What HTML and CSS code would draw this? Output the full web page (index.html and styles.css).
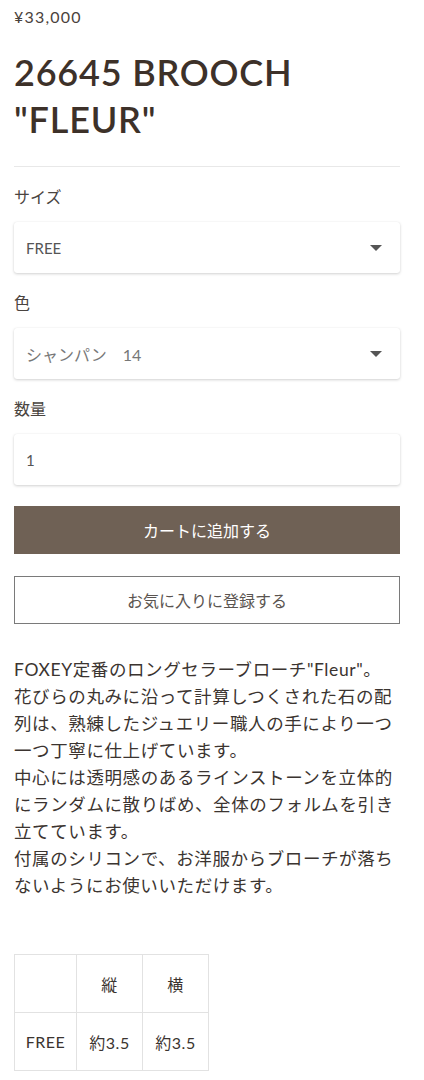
FILE: index.html
```html
<!DOCTYPE html>
<html lang="ja">
<head>
    <meta charset="UTF-8">
    <meta name="viewport" content="width=device-width, initial-scale=1.0">
    <title>26645 BROOCH "FLEUR"</title>
    <link rel="stylesheet" href="styles.css">
</head>
<body>
    <main class="product">
        <p class="price">¥33,000</p>
        <h1 class="title">26645 BROOCH<br>"FLEUR"</h1>
        <hr class="divider">

        <!-- Optionen -->
        <form class="options">
            <label class="field-label">サイズ</label>
            <div class="select-box">
                <span>FREE</span>
                <span class="arrow"></span>
            </div>

            <label class="field-label">色</label>
            <div class="select-box">
                <span class="jp">シャンパン　14</span>
                <span class="arrow"></span>
            </div>

            <label class="field-label">数量</label>
            <div class="select-box">
                <span>1</span>
            </div>

            <button type="button" class="btn-cart">カートに追加する</button>
            <button type="button" class="btn-fav">お気に入りに登録する</button>
        </form>

        <p class="description">FOXEY定番のロングセラーブローチ"Fleur"。<br>花びらの丸みに沿って計算しつくされた石の配列は、熟練したジュエリー職人の手により一つ一つ丁寧に仕上げています。<br>中心には透明感のあるラインストーンを立体的にランダムに散りばめ、全体のフォルムを引き立てています。<br>付属のシリコンで、お洋服からブローチが落ちないようにお使いいただけます。</p>

        <!-- Größentabelle -->
        <table class="size-table">
            <tr>
                <td></td>
                <td>縦</td>
                <td>横</td>
            </tr>
            <tr>
                <td>FREE</td>
                <td>約3.5</td>
                <td>約3.5</td>
            </tr>
        </table>
    </main>
</body>
</html>
```

FILE: styles.css
```css
body {
    margin: 0;
    font-family: Lato, "Noto Sans CJK JP", sans-serif;
    color: #3b3430;
    background-color: #fff;
}
.product {
    padding: 0 24px 40px 14px;
}
.price {
    margin: 6px 0 0;
    font-size: 16px;
    line-height: 22px;
    letter-spacing: 1.2px;
    color: #4a423c;
}
.title {
    margin: 21px 0 0;
    font-size: 36px;
    line-height: 47px;
    font-weight: 600;
    letter-spacing: 0.8px;
    color: #3d3129;
}
.divider {
    margin: 23px 0 0;
    border: none;
    border-top: 1px solid #e8e8e8;
}
.options {
    display: flex;
    flex-direction: column;
}
.field-label {
    margin-top: 18px;
    font-size: 16px;
    line-height: 24px;
    color: #4a4440;
}
.select-box {
    margin-top: 13px;
    height: 51px;
    padding: 0 18px 0 12px;
    display: flex;
    align-items: center;
    justify-content: space-between;
    border-radius: 3px;
    background-color: #fff;
    box-shadow: 0 1px 3px rgba(0, 0, 0, 0.18), 0 0 1px rgba(0, 0, 0, 0.08);
    font-size: 15px;
    color: #555;
}
.select-box .jp {
    font-size: 16px;
    color: #777;
}
.arrow {
    width: 0;
    height: 0;
    border-left: 6px solid transparent;
    border-right: 6px solid transparent;
    border-top: 6px solid #555;
}
.btn-cart {
    margin-top: 21px;
    height: 48px;
    border: none;
    background-color: #6f6155;
    color: #fff;
    font-family: inherit;
    font-size: 16px;
    cursor: pointer;
}
.btn-fav {
    margin-top: 22px;
    height: 48px;
    border: 1px solid #7a7a7a;
    background-color: #fff;
    color: #5a5450;
    font-family: inherit;
    font-size: 16px;
    cursor: pointer;
}
.description {
    margin: 32px 0 0;
    font-size: 17.5px;
    line-height: 27px;
    letter-spacing: 0.6px;
    color: #3b3430;
}
.size-table {
    margin-top: 55px;
    border-collapse: collapse;
    font-size: 16px;
    letter-spacing: 0.5px;
}
.size-table td {
    border: 1px solid #e2e2e2;
    width: 65px;
    height: 57px;
    padding: 0;
    text-align: center;
    color: #3b3430;
}
.size-table td:first-child {
    width: 61px;
}
```
